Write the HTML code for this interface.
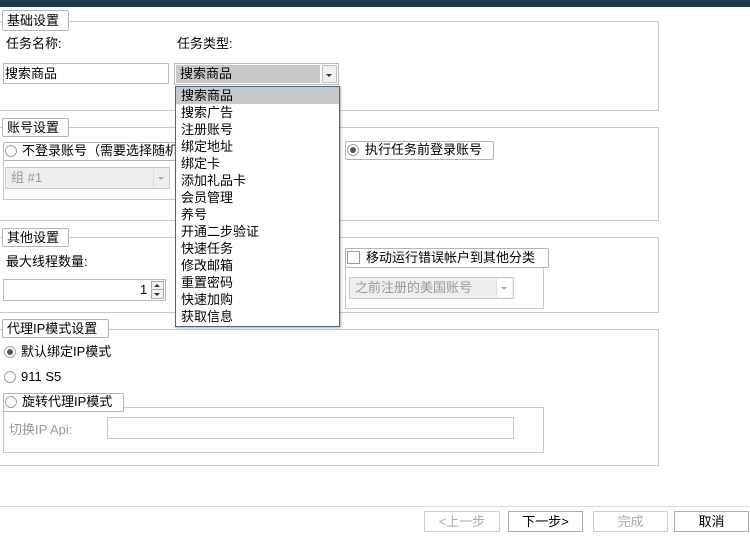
<!DOCTYPE html>
<html><head><meta charset="utf-8"><style>
*{box-sizing:border-box;margin:0;padding:0}
body{width:750px;height:536px;position:relative;background:#fff;overflow:hidden;font-family:"Liberation Sans","WenQuanYi Zen Hei","Noto Sans CJK SC",sans-serif;font-size:13px;color:#000}
.a{position:absolute}
.t{position:absolute;line-height:14px;white-space:nowrap}
.frame{position:absolute;border:1px solid #c8c8c8;border-left:none}
.box{position:absolute;border:1px solid #b8b8b8;background:#fff;border-radius:2px}
.lbl{position:absolute;border:1px solid #b4b4b4;border-radius:2px;background:#fff;line-height:16px;padding-left:4px;white-space:nowrap}
.radio{position:absolute;width:12px;height:12px;border:1px solid #a0a0a0;border-radius:50%;background:#fff}
.radio.on::after{content:"";position:absolute;left:2px;top:2px;width:6px;height:6px;border-radius:50%;background:#555}
.btn{position:absolute;top:511px;height:21px;border:1px solid #adadad;background:#fff;text-align:center;line-height:19px}
.arr{position:absolute;width:0;height:0;border-left:3px solid transparent;border-right:3px solid transparent;border-top:3px solid #333}
.dd div{height:17px;line-height:17px;padding-left:5px}
</style></head><body>
<div class="a" style="left:0;top:0;width:750px;height:7px;background:#1f3848"></div>

<!-- 基础设置 -->
<div class="frame" style="left:-1px;top:21px;width:660px;height:90px"></div>
<div class="lbl" style="left:2px;top:10px;width:67px;height:21px;line-height:19px">基础设置</div>
<div class="t" style="left:6px;top:37px">任务名称:</div>
<div class="t" style="left:177px;top:37px">任务类型:</div>
<div class="box" style="left:3px;top:63px;width:166px;height:21px;border-radius:0"></div>
<div class="t" style="left:5px;top:67px">搜索商品</div>
<div class="a" style="left:174px;top:63px;width:165px;height:22px;border:1px solid #b8b8b8;background:#fff"></div>
<div class="a" style="left:176px;top:65px;width:144px;height:18px;background:#c8c8c8"></div>
<div class="t" style="left:180px;top:67px">搜索商品</div>
<div class="a" style="left:322px;top:65px;width:15px;height:18px;border:1px solid #c0c0c0;background:#f0f0f0"></div>
<div class="arr" style="left:326px;top:74px"></div>

<!-- 账号设置 -->
<div class="frame" style="left:-1px;top:127px;width:660px;height:94px"></div>
<div class="lbl" style="left:2px;top:118px;width:67px;height:19px;line-height:17px">账号设置</div>
<div class="lbl" style="left:3px;top:142px;width:200px;height:19px;padding-left:18px">不登录账号（需要选择随机</div>
<div class="radio" style="left:5px;top:145px"></div>
<div class="frame" style="left:3px;top:152px;width:180px;height:48px;border-left:1px solid #c8c8c8;border-top:none"></div>
<div class="a" style="left:5px;top:167px;width:165px;height:22px;border:1px solid #c8c8c8;background:#eee"></div>
<div class="t" style="left:11px;top:171px;color:#999">组 #1</div>
<div class="a" style="left:153px;top:169px;width:15px;height:18px;border-left:1px solid #ddd"></div>
<div class="arr" style="left:158px;top:177px;border-top-color:#aaa"></div>
<div class="lbl" style="left:345px;top:141px;width:149px;height:19px;padding-left:19px">执行任务前登录账号</div>
<div class="radio on" style="left:347px;top:144px"></div>

<!-- 其他设置 -->
<div class="frame" style="left:-1px;top:237px;width:660px;height:76px"></div>
<div class="lbl" style="left:2px;top:228px;width:67px;height:19px;line-height:17px">其他设置</div>
<div class="t" style="left:6px;top:255px">最大线程数量:</div>
<div class="box" style="left:3px;top:279px;width:163px;height:22px;border-radius:0"></div>
<div class="t" style="left:140px;top:283px">1</div>
<div class="a" style="left:151px;top:281px;width:13px;height:18px;border:1px solid #aaa;background:#f4f4f4"></div>
<div class="a" style="left:151px;top:289px;width:13px;height:1px;background:#aaa"></div>
<div class="arr" style="left:154px;top:284px;border-top:none;border-bottom:3px solid #333"></div>
<div class="arr" style="left:154px;top:293px"></div>
<div class="frame" style="left:345px;top:258px;width:199px;height:51px;border-left:1px solid #c8c8c8;border-top:none"></div>
<div class="lbl" style="left:345px;top:248px;width:204px;height:20px;padding-left:20px;line-height:18px">移动运行错误帐户到其他分类</div>
<div class="a" style="left:347px;top:251px;width:13px;height:13px;border:1px solid #999;background:#fff"></div>
<div class="a" style="left:349px;top:277px;width:165px;height:22px;border:1px solid #c8c8c8;background:#eee"></div>
<div class="t" style="left:355px;top:281px;color:#999">之前注册的美国账号</div>
<div class="a" style="left:496px;top:279px;width:16px;height:18px;border-left:1px solid #ddd;background:#fff"></div>
<div class="arr" style="left:501px;top:287px;border-top-color:#aaa"></div>

<!-- 代理IP -->
<div class="frame" style="left:-1px;top:329px;width:660px;height:137px"></div>
<div class="lbl" style="left:2px;top:319px;width:107px;height:19px;line-height:17px">代理IP模式设置</div>
<div class="radio on" style="left:4px;top:346px"></div>
<div class="t" style="left:21px;top:345px">默认绑定IP模式</div>
<div class="radio" style="left:4px;top:371px"></div>
<div class="t" style="left:21px;top:370px">911 S5</div>
<div class="frame" style="left:3px;top:407px;width:541px;height:46px;border-left:1px solid #c8c8c8"></div>
<div class="lbl" style="left:3px;top:393px;width:121px;height:19px;padding-left:18px">旋转代理IP模式</div>
<div class="radio" style="left:5px;top:396px"></div>
<div class="t" style="left:9px;top:423px;color:#999">切换IP Api:</div>
<div class="a" style="left:107px;top:417px;width:407px;height:22px;border:1px solid #c8c8c8;background:#fff"></div>

<!-- bottom -->
<div class="a" style="left:0;top:506px;width:750px;height:1px;background:#d8d8d8"></div>
<div class="btn" style="left:424px;width:76px;color:#aaa;border-color:#ccc">&lt;上一步</div>
<div class="btn" style="left:508px;width:75px">下一步&gt;</div>
<div class="btn" style="left:593px;width:75px;color:#aaa;border-color:#ccc">完成</div>
<div class="btn" style="left:674px;width:75px">取消</div>

<!-- dropdown -->
<div class="a dd" style="left:175px;top:86px;width:165px;height:241px;border:1px solid #3c6a8c;background:#fff;box-shadow:1px 1px 2px rgba(0,0,0,.3);padding-top:0">
<div style="background:#c8c8c8">搜索商品</div>
<div>搜索广告</div><div>注册账号</div><div>绑定地址</div><div>绑定卡</div><div>添加礼品卡</div><div>会员管理</div><div>养号</div><div>开通二步验证</div><div>快速任务</div><div>修改邮箱</div><div>重置密码</div><div>快速加购</div><div>获取信息</div>
</div>
</body></html>
